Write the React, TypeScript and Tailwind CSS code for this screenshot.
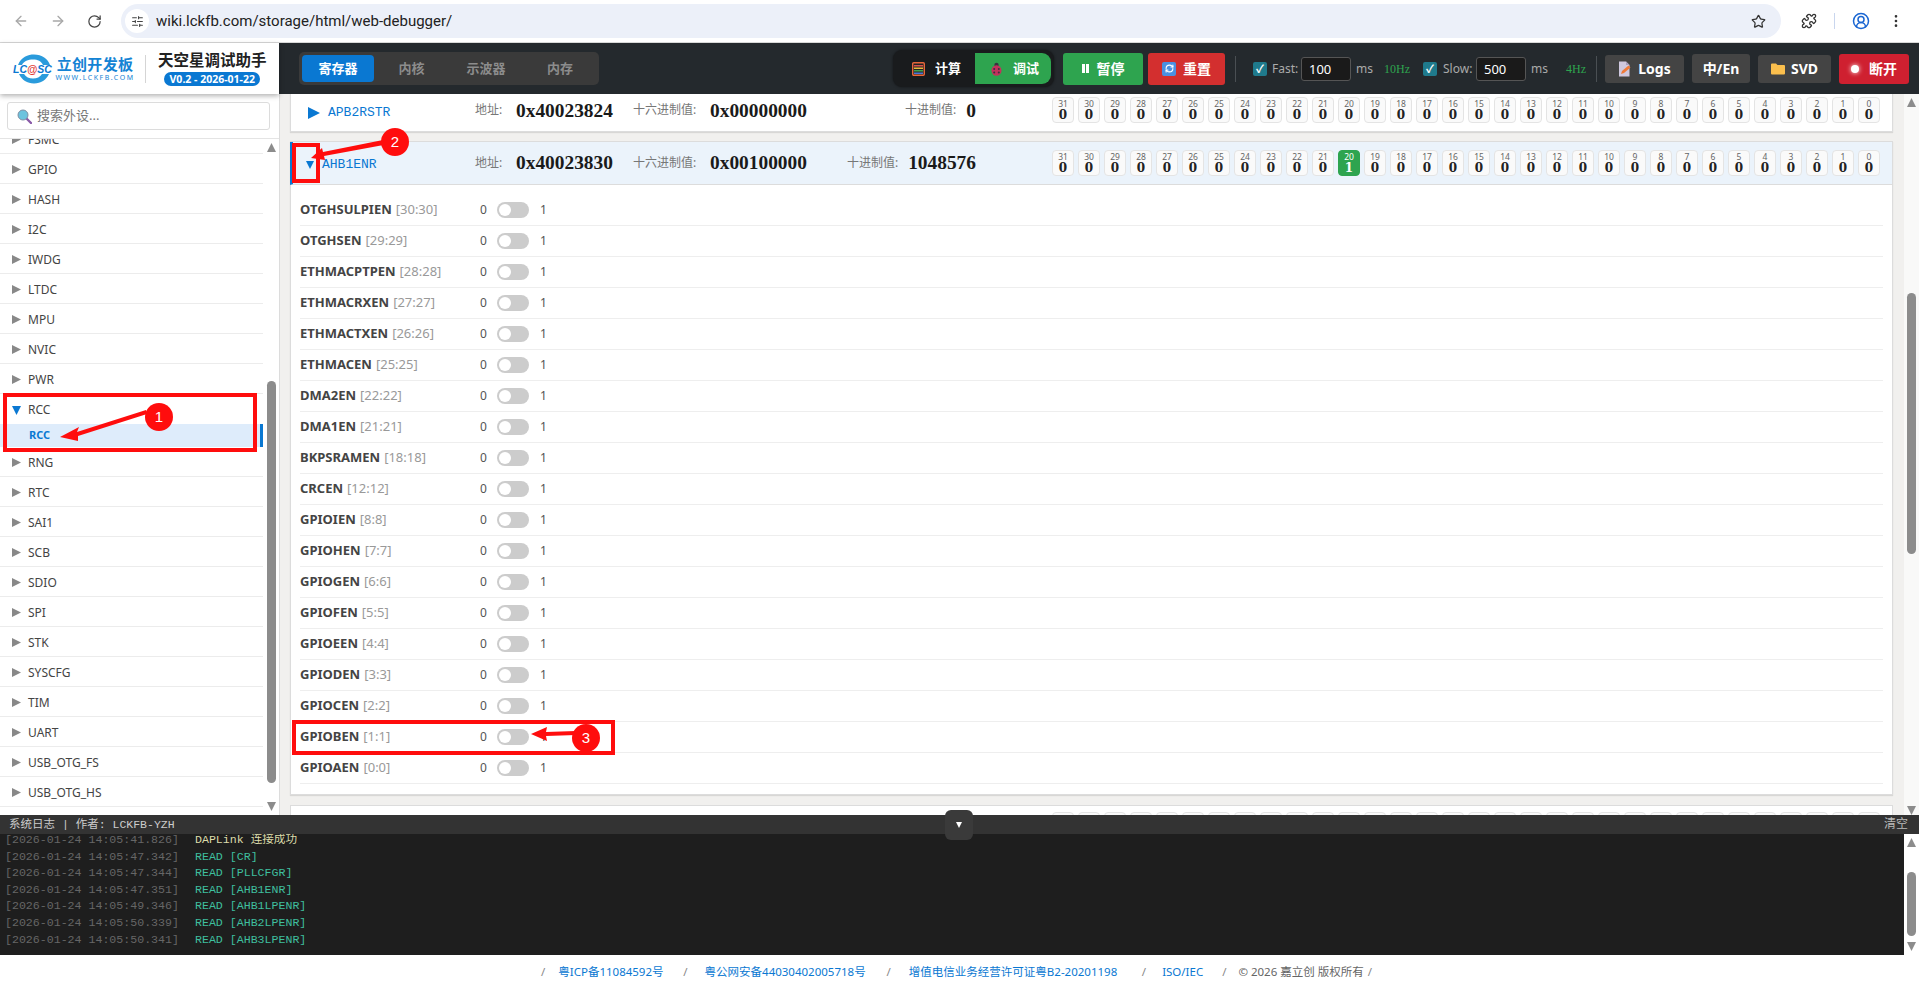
import {
  ArrowLeft,
  ArrowRight,
  EllipsisVertical,
  Puzzle,
  RefreshCw,
  RotateCw,
  SlidersHorizontal,
  Star,
  CircleUserRound,
} from 'lucide-react';

const periphBefore = ['GPIO', 'HASH', 'I2C', 'IWDG', 'LTDC', 'MPU', 'NVIC', 'PWR'];
const periphAfter = ['RNG', 'RTC', 'SAI1', 'SCB', 'SDIO', 'SPI', 'STK', 'SYSCFG', 'TIM', 'UART', 'USB_OTG_FS', 'USB_OTG_HS'];

const fields = [
  ['OTGHSULPIEN', '[30:30]'],
  ['OTGHSEN', '[29:29]'],
  ['ETHMACPTPEN', '[28:28]'],
  ['ETHMACRXEN', '[27:27]'],
  ['ETHMACTXEN', '[26:26]'],
  ['ETHMACEN', '[25:25]'],
  ['DMA2EN', '[22:22]'],
  ['DMA1EN', '[21:21]'],
  ['BKPSRAMEN', '[18:18]'],
  ['CRCEN', '[12:12]'],
  ['GPIOIEN', '[8:8]'],
  ['GPIOHEN', '[7:7]'],
  ['GPIOGEN', '[6:6]'],
  ['GPIOFEN', '[5:5]'],
  ['GPIOEEN', '[4:4]'],
  ['GPIODEN', '[3:3]'],
  ['GPIOCEN', '[2:2]'],
  ['GPIOBEN', '[1:1]'],
  ['GPIOAEN', '[0:0]'],
];

const logs = [
  ['41.826', 'DAPLink 连接成功', 'text-[#dcdcaa]'],
  ['47.342', 'READ [CR]', 'text-[#3fbf9f]'],
  ['47.344', 'READ [PLLCFGR]', 'text-[#3fbf9f]'],
  ['47.351', 'READ [AHB1ENR]', 'text-[#3fbf9f]'],
  ['49.346', 'READ [AHB1LPENR]', 'text-[#3fbf9f]'],
  ['50.339', 'READ [AHB2LPENR]', 'text-[#3fbf9f]'],
  ['50.341', 'READ [AHB3LPENR]', 'text-[#3fbf9f]'],
];

function Tri({ dir, size, color }: { dir: 'right' | 'down' | 'up'; size: number; color: string }) {
  const points = dir === 'right' ? '0,0 10,5 0,10' : dir === 'down' ? '0,0 10,0 5,10' : '0,10 10,10 5,0';
  return (
    <svg width={size} height={size} viewBox="0 0 10 10" className="shrink-0">
      <polygon points={points} fill={color} />
    </svg>
  );
}

function BrowserBar() {
  return (
    <div className="h-[43px] shrink-0 bg-white border-b border-[#d8d8d8] flex items-center text-[#444]">
      <ArrowLeft size={16} className="ml-[13px] text-[#a8a8a8]" />
      <ArrowRight size={16} className="ml-[21px] text-[#a8a8a8]" />
      <RotateCw size={15} className="ml-[21px] text-[#444]" />
      <div className="ml-[19px] w-[1660px] h-[34px] rounded-full bg-[#ecf0f9] flex items-center">
        <div className="ml-[4px] w-[24px] h-[24px] rounded-full bg-white flex items-center justify-center">
          <SlidersHorizontal size={13} />
        </div>
        <span className="ml-[7px] text-[15px] text-[#222] font-['Roboto',sans-serif]">wiki.lckfb.com/storage/html/web-debugger/</span>
        <Star size={15} className="ml-auto mr-[15px] text-[#333]" />
      </div>
      <Puzzle size={16} className="ml-[20px] text-[#333]" />
      <div className="ml-[17px] w-px h-[16px] bg-[#c9d6ee]" />
      <CircleUserRound size={18} className="ml-[17px] text-[#1a66d2]" />
      <EllipsisVertical size={16} className="ml-[18px] text-[#333]" />
    </div>
  );
}

function LogoMark() {
  return (
    <svg width="40" height="30" viewBox="0 0 40 30" className="shrink-0">
      <path d="M5 11 C8 3 15 0.5 21 0.5 C29 0.5 35 5 37 11 L30 11 C28 7 25 5.5 20 5.5 C15 5.5 11 7 9 11 Z" fill="#2a9bdc" />
      <path d="M6 20 C9 26 14 29.5 21 29.5 C28 29.5 33 26 36 20 L29 20 C27 23 24 24.5 20 24.5 C16 24.5 13 23 11 20 Z" fill="#2a9bdc" />
      <text x="0" y="19" fontSize="10.5" fontWeight="700" fontStyle="italic" fontFamily="Liberation Sans, sans-serif" fill="#0a78d2">
        LC<tspan fill="#e0413a">@</tspan>SC
      </text>
    </svg>
  );
}

function Logo() {
  return (
    <div className="w-[279px] shrink-0 bg-white flex items-center relative z-10 shadow-[0_2px_5px_rgba(0,0,0,0.3)]">
      <div className="ml-[13px]">
        <LogoMark />
      </div>
      <div className="ml-[3px] w-[78px] flex flex-col items-center">
        <span className="text-[15px] leading-[18px] font-bold tracking-[0.3px] text-[#1483d4]">立创开发板</span>
        <span className="text-[7px] leading-[9px] tracking-[1.55px] text-[#1483d4] whitespace-nowrap">WWW.LCKFB.COM</span>
      </div>
      <div className="ml-[11px] w-px h-[28px] bg-[#d5d5d5]" />
      <div className="ml-[12px] flex flex-col items-center">
        <span className="text-[15.5px] leading-[19px] font-bold text-[#222] whitespace-nowrap">天空星调试助手</span>
        <span className="mt-[2px] w-[96px] h-[14px] rounded-full bg-[#0a78d2] text-white text-[10.5px] leading-[14px] font-bold text-center whitespace-nowrap">V0.2 - 2026-01-22</span>
      </div>
    </div>
  );
}

function AbacusIcon() {
  return (
    <svg width="13" height="14" viewBox="0 0 13 14" className="shrink-0">
      <rect x="0.7" y="0.7" width="11.6" height="12.6" rx="1" fill="#222" stroke="#e8663a" strokeWidth="1.4" />
      <rect x="2" y="3" width="9" height="1.5" fill="#d9534f" />
      <rect x="2" y="5.5" width="9" height="1.5" fill="#e8b93a" />
      <rect x="2" y="8" width="9" height="1.5" fill="#3fa34d" />
      <rect x="2" y="10.5" width="9" height="1.5" fill="#4a78d9" />
    </svg>
  );
}

function BugIcon() {
  return (
    <svg width="13" height="14" viewBox="0 0 13 14" className="shrink-0">
      <circle cx="6.5" cy="3" r="2.2" fill="#3a3140" />
      <ellipse cx="6.5" cy="8.5" rx="5" ry="5.2" fill="#c2325c" />
      <circle cx="4.2" cy="7" r="1" fill="#3a3140" />
      <circle cx="8.8" cy="7" r="1" fill="#3a3140" />
      <circle cx="4.2" cy="10.5" r="1" fill="#3a3140" />
      <circle cx="8.8" cy="10.5" r="1" fill="#3a3140" />
    </svg>
  );
}

function DocIcon() {
  return (
    <svg width="13" height="16" viewBox="0 0 13 16" className="shrink-0">
      <path d="M1 0.5 H8 L11.5 4 V15.5 H1 Z" fill="#cfc8df" />
      <path d="M8 0.5 V4 H11.5 Z" fill="#a89fbd" />
      <path d="M3 13 L4 10 L10.5 4.5 L12.5 6.5 L6 12 Z" fill="#ef7a3a" />
    </svg>
  );
}

function FolderIcon() {
  return (
    <svg width="14" height="12" viewBox="0 0 14 12" className="shrink-0">
      <path d="M0 1.5 Q0 0.5 1 0.5 H5 L6.5 2 H13 Q14 2 14 3 V10.5 Q14 11.5 13 11.5 H1 Q0 11.5 0 10.5 Z" fill="#fbbf4d" />
    </svg>
  );
}

function SearchIcon() {
  return (
    <svg width="15" height="15" viewBox="0 0 15 15" className="shrink-0">
      <path d="M9 9 L14 14" stroke="#8a5aa8" strokeWidth="2.4" strokeLinecap="round" />
      <circle cx="6" cy="6" r="5" fill="#6cc3de" stroke="#7d8ea3" strokeWidth="1" />
    </svg>
  );
}

function Toolbar() {
  return (
    <div className="flex-1 bg-[#24292d] flex items-center text-[12px] text-[#aaa]">
      <div className="ml-[20px] w-[300px] h-[33px] rounded-[5px] bg-[#3a3a3a] flex items-center pl-[3px] text-[13px] font-bold text-[#8c8c8c]">
        <div className="w-[72px] h-[27px] rounded-[4px] bg-[#0a78d2] text-white flex items-center justify-center">寄存器</div>
        <div className="w-[75px] text-center">内核</div>
        <div className="w-[74px] text-center">示波器</div>
        <div className="w-[74px] text-center">内存</div>
      </div>

      <div className="ml-[294px] w-[161px] h-[37px] rounded-[9px] bg-[#191b1d] shadow-[0_0_3px_rgba(0,0,0,0.5)] flex items-center text-[13px] font-bold text-white">
        <div className="w-[82px] flex items-center pl-[19px] gap-[10px]">
          <AbacusIcon />
          <span>计算</span>
        </div>
        <div className="w-[76px] h-[31px] rounded-r-[9px] bg-[#2ea44f] flex items-center pl-[15px] gap-[10px]">
          <BugIcon />
          <span>调试</span>
        </div>
      </div>
      <div className="ml-[9px] w-[80px] h-[32px] rounded-[3px] bg-[#2ea44f] flex items-center justify-center gap-[8px] text-white text-[14px] font-bold">
        <span className="flex gap-px">
          <span className="w-[3px] h-[9px] bg-white" />
          <span className="w-[3px] h-[9px] bg-white" />
        </span>
        <span>暂停</span>
      </div>
      <div className="ml-[5px] w-[77px] h-[32px] rounded-[3px] bg-[#d32f2f] flex items-center justify-center gap-[7px] text-white text-[14px] font-bold">
        <span className="w-[14px] h-[14px] rounded-[2px] bg-[#4a90e2] flex items-center justify-center">
          <RefreshCw size={9} strokeWidth={3} className="text-white" />
        </span>
        <span>重置</span>
      </div>

      <div className="ml-[10px] w-px h-[26px] bg-[#4a4f53]" />

      <span className="ml-[17px] w-[14px] h-[14px] rounded-[2px] bg-[#1f7a8c] flex items-center justify-center text-white text-[11px] font-bold leading-none">✓</span>
      <span className="ml-[5px] w-[29px]">Fast:</span>
      <div className="w-[50px] h-[24px] rounded-[3px] border border-[#555] bg-[#1a1a1a] text-white text-[13px] leading-[22px] pl-[7px]">100</div>
      <span className="ml-[5px] w-[28px]">ms</span>
      <span className="w-[39px] text-[#2ea44f] font-['Liberation_Serif',serif]">10Hz</span>
      <span className="w-[14px] h-[14px] rounded-[2px] bg-[#1f7a8c] flex items-center justify-center text-white text-[11px] font-bold leading-none">✓</span>
      <span className="ml-[6px] w-[33px]">Slow:</span>
      <div className="w-[50px] h-[24px] rounded-[3px] border border-[#555] bg-[#1a1a1a] text-white text-[13px] leading-[22px] pl-[7px]">500</div>
      <span className="ml-[5px] w-[35px]">ms</span>
      <span className="w-[30px] text-[#2ea44f] font-['Liberation_Serif',serif]">4Hz</span>

      <div className="w-px h-[26px] bg-[#4a4f53]" />

      <div className="ml-[8px] w-[79px] h-[28px] rounded-[3px] bg-[#444] flex items-center justify-center gap-[7px] text-white text-[14px] font-bold">
        <DocIcon />
        <span>Logs</span>
      </div>
      <div className="ml-[8px] w-[58px] h-[29px] rounded-[3px] bg-[#444] flex items-center justify-center text-white text-[14px] font-bold">中/En</div>
      <div className="ml-[8px] w-[73px] h-[28px] rounded-[3px] bg-[#444] flex items-center justify-center gap-[6px] text-white text-[14px] font-bold">
        <FolderIcon />
        <span>SVD</span>
      </div>
      <div className="ml-[8px] w-[70px] h-[30px] rounded-[3px] bg-[#cf2030] flex items-center justify-center gap-[10px] text-white text-[14px] font-bold">
        <span className="w-[8px] h-[8px] rounded-full bg-white shadow-[0_0_5px_#fff]" />
        <span>断开</span>
      </div>
    </div>
  );
}

function SideRow({ name }: { name: string }) {
  return (
    <div className="h-[30px] border-b border-[#ececec] flex items-center pt-[2px] pl-[12px] gap-[7px] text-[12px] text-[#444]">
      <Tri dir="right" size={9} color="#888" />
      <span>{name}</span>
    </div>
  );
}

function Sidebar() {
  return (
    <div className="w-[280px] shrink-0 bg-white border-r border-[#dcdcdc] flex flex-col">
      <div className="h-[45px] shrink-0 border-b border-[#e4e4e4] pl-[7px] pr-[9px] pt-[8px]">
        <div className="h-[28px] rounded-[3px] border border-[#dcdcdc] flex items-center pl-[9px] gap-[5px] text-[13px] text-[#777]">
          <SearchIcon />
          <span>搜索外设...</span>
        </div>
      </div>
      <div className="flex-1 flex overflow-hidden">
        <div className="w-[263px] shrink-0 overflow-hidden">
          <div className="-mt-[15px]">
            <SideRow name="FSMC" />
            {periphBefore.map((p) => (
              <SideRow key={p} name={p} />
            ))}
            <div className="h-[30px] flex items-center pt-[2px] pl-[12px] gap-[7px] text-[12px] text-[#444]">
              <Tri dir="down" size={9} color="#0a78d2" />
              <span>RCC</span>
            </div>
            <div className="h-[23px] bg-[#deecfb] border-r-[3px] border-[#0a78d2] flex items-center pl-[29px] text-[11px] font-bold text-[#0a78d2]">RCC</div>
            {periphAfter.map((p) => (
              <SideRow key={p} name={p} />
            ))}
          </div>
        </div>
        <div className="flex-1 flex flex-col items-center pt-[4px]">
          <Tri dir="up" size={9} color="#8c8c8c" />
          <div className="mt-[229px] w-[9px] h-[402px] rounded-full bg-[#8c8c8c]" />
          <div className="mt-[19px]">
            <Tri dir="down" size={9} color="#8c8c8c" />
          </div>
        </div>
      </div>
    </div>
  );
}

function BitCell({ index, on }: { index: number; on: boolean }) {
  return (
    <div className={`w-[22px] h-[26px] rounded-[4px] border flex flex-col items-center pt-[1px] ${on ? 'bg-[#2ea44f] border-[#2ea44f] text-white' : 'bg-[#fafafa] border-[#e4e4e4] text-[#222]'}`}>
      <span className={`text-[8.5px] leading-[10px] ${on ? 'text-white' : 'text-[#666]'}`}>{index}</span>
      <span className="text-[12px] leading-[12px] font-bold font-['DejaVu_Serif',serif]">{on ? 1 : 0}</span>
    </div>
  );
}

function BitRow({ onBit }: { onBit?: number }) {
  return (
    <div className="ml-auto mr-[12px] flex gap-[4px]">
      {Array.from({ length: 32 }, (_, i) => 31 - i).map((i) => (
        <BitCell key={i} index={i} on={i === onBit} />
      ))}
    </div>
  );
}

type RegHeaderProps = {
  name: string
  addr: string
  hex: string
  dec: string
  onBit?: number
  open?: boolean
}

function RegHeader({ name, addr, hex, dec, onBit, open }: RegHeaderProps) {
  const nudge = open ? '' : 'mt-[2px]';
  return (
    <div className={`h-[43px] flex items-center text-[12px] text-[#777] whitespace-nowrap ${open ? '-ml-px bg-[#ebf3fb] border-b border-[#dcdcdc] border-l-[3px] border-l-[#0a78d2]' : ''}`}>
      <div className={`shrink-0 flex items-center pt-[4px] text-[13px] text-[#0a78d2] font-['Liberation_Mono',monospace] ${nudge} ${open ? 'w-[182px] pl-[13px] gap-[8px]' : 'w-[184px] pl-[17px] gap-[8px]'}`}>
        <Tri dir={open ? 'down' : 'right'} size={open ? 8 : 12} color="#0a78d2" />
        <span>{name}</span>
      </div>
      <div className={`w-[158px] shrink-0 flex items-center ${nudge}`}>
        <span className="w-[41px]">地址:</span>
        <span className="text-[19.4px] text-[#1a1a1a] font-semibold font-['Liberation_Serif',serif]">{addr}</span>
      </div>
      <div className={`w-[174px] shrink-0 flex items-center ${nudge}`}>
        <span className="w-[77px]">十六进制值:</span>
        <span className="text-[19.4px] text-[#1a1a1a] font-semibold font-['Liberation_Serif',serif]">{hex}</span>
      </div>
      <div className={`w-[169px] shrink-0 flex items-center justify-end ${nudge}`}>
        <span>十进制值:</span>
        <span className="ml-[10px] text-[19.4px] text-[#1a1a1a] font-semibold font-['Liberation_Serif',serif]">{dec}</span>
      </div>
      <BitRow onBit={onBit} />
    </div>
  );
}

function FieldRow({ name, range }: { name: string; range: string }) {
  return (
    <div className="h-[31px] border-b border-[#eee] flex items-center text-[13px]">
      <div className="w-[180px] shrink-0">
        <span className="font-bold text-[#444]">{name}</span>
        <span className="ml-[4px] text-[#999]">{range}</span>
      </div>
      <span className="w-[17px] text-[#555] text-[12px]">0</span>
      <div className="w-[32px] h-[16px] rounded-full bg-[#ccc] flex items-center pl-[2px]">
        <div className="w-[12px] h-[12px] rounded-full bg-white" />
      </div>
      <span className="ml-[11px] text-[#555] text-[12px]">1</span>
    </div>
  );
}

function MainPanel() {
  return (
    <div className="flex-1 flex bg-[#f1f0ee] overflow-hidden">
      <div className="flex-1 pl-[10px] pr-[11px] overflow-hidden">
        <div className="-mt-[6px] bg-white border-x border-b border-[#dcdcdc] shadow-[0_1px_1px_rgba(0,0,0,0.1)]">
          <RegHeader name="APB2RSTR" addr="0x40023824" hex="0x00000000" dec="0" />
        </div>
        <div className="mt-[9px] bg-white border border-[#dcdcdc] shadow-[0_1px_1px_rgba(0,0,0,0.1)]">
          <RegHeader open name="AHB1ENR" addr="0x40023830" hex="0x00100000" dec="1048576" onBit={20} />
          <div className="pl-[9px] pr-[9px] pt-[10px] pb-[10px]">
            {fields.map(([n, r]) => (
              <FieldRow key={n} name={n} range={r} />
            ))}
          </div>
        </div>
        <div className="mt-[10px] bg-white border border-[#dcdcdc] pt-[6px] h-[43px] flex">
          <BitRow />
        </div>
      </div>
      <div className="w-[15px] shrink-0 bg-white/60 flex flex-col items-center pt-[4px]">
        <Tri dir="up" size={9} color="#8c8c8c" />
        <div className="mt-[186px] w-[9px] h-[261px] rounded-full bg-[#8c8c8c]" />
        <div className="mt-[252px]">
          <Tri dir="down" size={9} color="#8c8c8c" />
        </div>
      </div>
    </div>
  );
}

function LogPanel() {
  return (
    <div className="h-[140px] shrink-0 flex flex-col bg-[#1e1e1e] relative z-10 font-['Liberation_Mono','Noto_Sans_CJK_SC',monospace]">
      <div className="h-[19px] shrink-0 bg-[#333] flex items-center pl-[9px] pr-[11px] text-[11.5px] text-[#ccc]">
        <span>系统日志 | 作者: LCKFB-YZH</span>
        <span className="ml-auto text-[12px] text-[#bbb]">清空</span>
      </div>
      <div className="absolute left-[945px] top-[-5px] w-[28px] h-[30px] rounded-[6px] bg-[#3a3a3a] flex items-center justify-center">
        <Tri dir="down" size={6} color="#fff" />
      </div>
      <div className="flex-1 flex overflow-hidden">
        <div className="flex-1 pl-[5px] text-[11.6px] leading-[16.6px] -mt-[2px]">
          {logs.map(([t, msg, color]) => (
            <div key={t} className="flex whitespace-pre">
              <span className="w-[190px] text-[#666]">[2026-01-24 14:05:{t}]</span>
              <span className={color}>{msg}</span>
            </div>
          ))}
        </div>
        <div className="w-[15px] shrink-0 bg-white flex flex-col items-center pt-[4px]">
          <Tri dir="up" size={9} color="#8c8c8c" />
          <div className="mt-[25px] w-[9px] h-[64px] rounded-full bg-[#8c8c8c]" />
          <div className="mt-[6px]">
            <Tri dir="down" size={9} color="#8c8c8c" />
          </div>
        </div>
      </div>
    </div>
  );
}

function Footer() {
  const Sep = () => <span className="text-[#888]">/</span>;
  return (
    <div className="h-[34px] shrink-0 bg-white flex items-center pl-[541px] text-[11.5px] text-[#0a78d2] whitespace-nowrap">
      <Sep />
      <span className="ml-[13px] w-[125px]">粤ICP备11084592号</span>
      <Sep />
      <span className="ml-[17px] w-[182px]">粤公网安备44030402005718号</span>
      <Sep />
      <span className="ml-[18px] w-[233px]">增值电信业务经营许可证粤B2-20201198</span>
      <Sep />
      <span className="ml-[16px] w-[60px]">ISO/IEC</span>
      <Sep />
      <span className="ml-[12px] text-[#666]">© 2026 嘉立创 版权所有</span>
      <span className="ml-[4px] text-[#888]">/</span>
    </div>
  );
}

function Annotations() {
  return (
    <svg className="absolute left-0 top-0 z-20 pointer-events-none" width="1919" height="989">
      <g fill="none" stroke="#ff0d0d" strokeWidth="4">
        <rect x="5" y="395" width="250" height="55" />
        <rect x="294" y="145" width="24" height="36" />
        <rect x="294" y="722" width="319" height="31" />
      </g>
      <g fill="#ff0d0d">
        <polygon points="60,437 79,427 77,432 146,410 147,414 78,436 78,441" />
        <polygon points="311,158 322,148 323,152 388,139 389,144 324,156 325,160" />
        <polygon points="531,734 547,727 546,732 576,731 576,735 546,736 547,741" />
        <circle cx="159" cy="417" r="14" />
        <circle cx="395" cy="142" r="14" />
        <circle cx="586" cy="738" r="14" />
      </g>
      <g fill="#fff" fontSize="15" fontFamily="Liberation Sans, sans-serif" textAnchor="middle">
        <text x="159" y="422">1</text>
        <text x="395" y="147">2</text>
        <text x="586" y="743">3</text>
      </g>
    </svg>
  );
}

export default function App() {
  return (
    <div className="relative w-full h-screen overflow-hidden flex flex-col bg-white font-['Noto_Sans','Noto_Sans_CJK_SC',sans-serif]">
      <BrowserBar />
      <div className="h-[51px] shrink-0 flex">
        <Logo />
        <Toolbar />
      </div>
      <div className="flex-1 flex min-h-0">
        <Sidebar />
        <MainPanel />
      </div>
      <LogPanel />
      <Footer />
      <Annotations />
    </div>
  );
}
